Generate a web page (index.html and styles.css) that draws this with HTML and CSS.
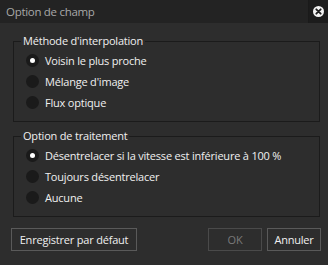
FILE: index.html
```html
<!DOCTYPE html>
<html lang="fr">
<head>
<meta charset="utf-8">
<title>Option de champ</title>
<link rel="stylesheet" href="styles.css">
</head>
<body>
<div class="dialog">
  <div class="titlebar">
    <div class="title">Option de champ</div>
    <div class="close">
      <svg width="11" height="11" viewBox="0 0 11 11">
        <circle cx="5.5" cy="5.5" r="5.5" fill="#f2f2f2"/>
        <path d="M3.3 3.3 L7.7 7.7 M7.7 3.3 L3.3 7.7" stroke="#1e1e1e" stroke-width="1.8" stroke-linecap="round"/>
      </svg>
    </div>
  </div>
  <div class="content">
    <fieldset class="group">
      <legend>Méthode d'interpolation</legend>
      <div class="row"><span class="radio checked"></span><span>Voisin le plus proche</span></div>
      <div class="row"><span class="radio"></span><span>Mélange d'image</span></div>
      <div class="row"><span class="radio"></span><span>Flux optique</span></div>
    </fieldset>
    <fieldset class="group">
      <legend>Option de traitement</legend>
      <div class="row"><span class="radio checked"></span><span>Désentrelacer si la vitesse est inférieure à 100 %</span></div>
      <div class="row"><span class="radio"></span><span>Toujours désentrelacer</span></div>
      <div class="row"><span class="radio"></span><span>Aucune</span></div>
    </fieldset>
    <div class="buttons">
      <button class="btn default">Enregistrer par défaut</button>
      <div class="spacer"></div>
      <button class="btn ok" disabled>OK</button>
      <button class="btn cancel">Annuler</button>
    </div>
  </div>
</div>
</body>
</html>
```
FILE: styles.css
```css
html, body {
  margin: 0;
  padding: 0;
  background: #2d2d2d;
}
body {
  font-family: "Open Sans", "Noto Sans", sans-serif;
  font-size: 11px;
  letter-spacing: -0.2px;
  color: #f0f0f0;
}
.dialog {
  width: 328px;
  height: 265px;
  background: #2d2d2d;
  display: flex;
  flex-direction: column;
}
.titlebar {
  height: 23px;
  background: #232323;
  display: flex;
  align-items: stretch;
}
.title {
  flex: 1;
  padding-left: 6px;
  font-size: 11.5px;
  letter-spacing: -0.3px;
  line-height: 23px;
  color: #a8a8a8;
}
.close {
  width: 19px;
  background: #1c1c1c;
  border-left: 1px solid #1a1a1a;
  display: flex;
  align-items: center;
  justify-content: center;
}
.content {
  padding: 11px 8px 0 13px;
  display: flex;
  flex-direction: column;
}
.group {
  margin: 0 0 7px 0;
  padding: 2px 0 8px 12px;
  border: 1px solid #1b1b1b;
  min-width: 0;
}
.group legend {
  margin-left: -5px;
  padding: 0 2px;
  line-height: 14px;
  color: #f0f0f0;
}
.row {
  height: 21px;
  display: flex;
  align-items: center;
  gap: 6px;
}
.radio {
  width: 13px;
  height: 13px;
  border-radius: 50%;
  background: #1a1a1a;
  display: flex;
  align-items: center;
  justify-content: center;
  flex: none;
}
.radio.checked::after {
  content: "";
  width: 5px;
  height: 5px;
  border-radius: 50%;
  background: #ffffff;
}
.buttons {
  display: flex;
  margin-top: 4px;
  margin-left: -2px;
  margin-right: -1px;
  gap: 5px;
}
.spacer {
  flex: 1;
}
.btn {
  height: 23px;
  padding: 0 4px;
  background: #2d2d2d;
  border: 1px solid #5a5a5a;
  font-family: inherit;
  font-size: 11px;
  letter-spacing: -0.2px;
  white-space: nowrap;
  color: #f0f0f0;
}
.btn.default {
  width: 126px;
}
.btn.ok,
.btn.cancel {
  width: 54px;
}
.btn.ok {
  color: #7a7a7a;
  border-color: #4a4a4a;
}
```
